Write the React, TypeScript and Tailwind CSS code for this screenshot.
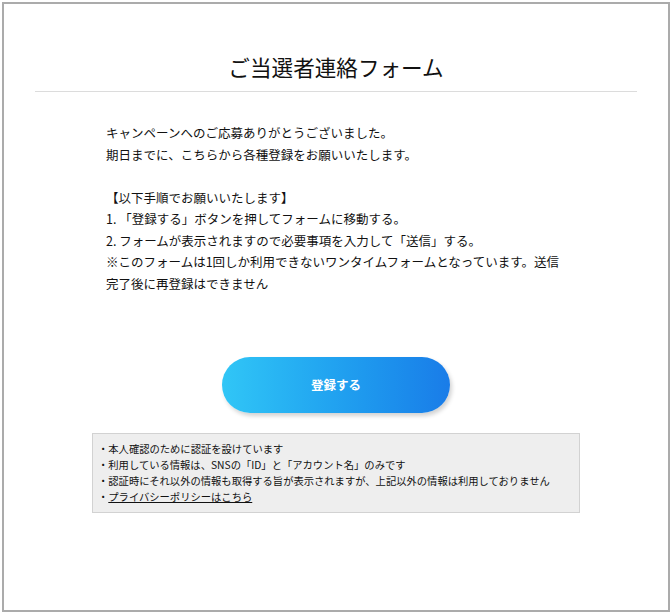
export default function App() {
  const notes = [
    "本人確認のために認証を設けています",
    "利用している情報は、SNSの「ID」と「アカウント名」のみです",
    "認証時にそれ以外の情報も取得する旨が表示されますが、上記以外の情報は利用しておりません",
  ];

  return (
    <div className="w-[670px] h-[612px] bg-white pl-[2px] pt-[2px] font-['Noto_Sans_CJK_JP',sans-serif] text-[#111]">
      <div className="w-[668px] h-[610px] border-2 border-[#ababab] flex flex-col">
        <h1 className="pt-[47px] text-center text-[21.6px] leading-[32px] text-[#111]">
          ご当選者連絡フォーム
        </h1>
        <div className="mx-[31px] mt-[8px] h-px bg-[#dcdcdc]" />

        <div className="mx-auto mt-[30px] w-[460px] text-[12.5px] leading-[21.5px]">
          <p>キャンペーンへのご応募ありがとうございました。</p>
          <p>期日までに、こちらから各種登録をお願いいたします。</p>
          <p className="h-[21.5px]" />
          <p>【以下手順でお願いいたします】</p>
          <p>1. 「登録する」ボタンを押してフォームに移動する。</p>
          <p>2. フォームが表示されますので必要事項を入力して「送信」する。</p>
          <p>
            ※このフォームは1回しか利用できないワンタイムフォームとなっています。送信完了後に再登録はできません
          </p>
        </div>

        <button
          type="button"
          className="mx-auto mt-[63px] w-[228px] h-[56px] rounded-full bg-gradient-to-r from-[#31c6f6] to-[#1a7ce8] text-white text-[12.5px] font-bold shadow-[2px_3px_4px_rgba(0,0,0,0.18)]"
        >
          登録する
        </button>

        <div className="mx-auto mt-[20px] w-[488px] border border-[#d2d2d2] bg-[#eeeeee] pl-[5px] py-[7px] text-[10.3px] leading-[16px]">
          {notes.map((n) => (
            <p key={n}>・{n}</p>
          ))}
          <p>
            ・<span className="underline">プライバシーポリシーはこちら</span>
          </p>
        </div>
      </div>
    </div>
  );
}
